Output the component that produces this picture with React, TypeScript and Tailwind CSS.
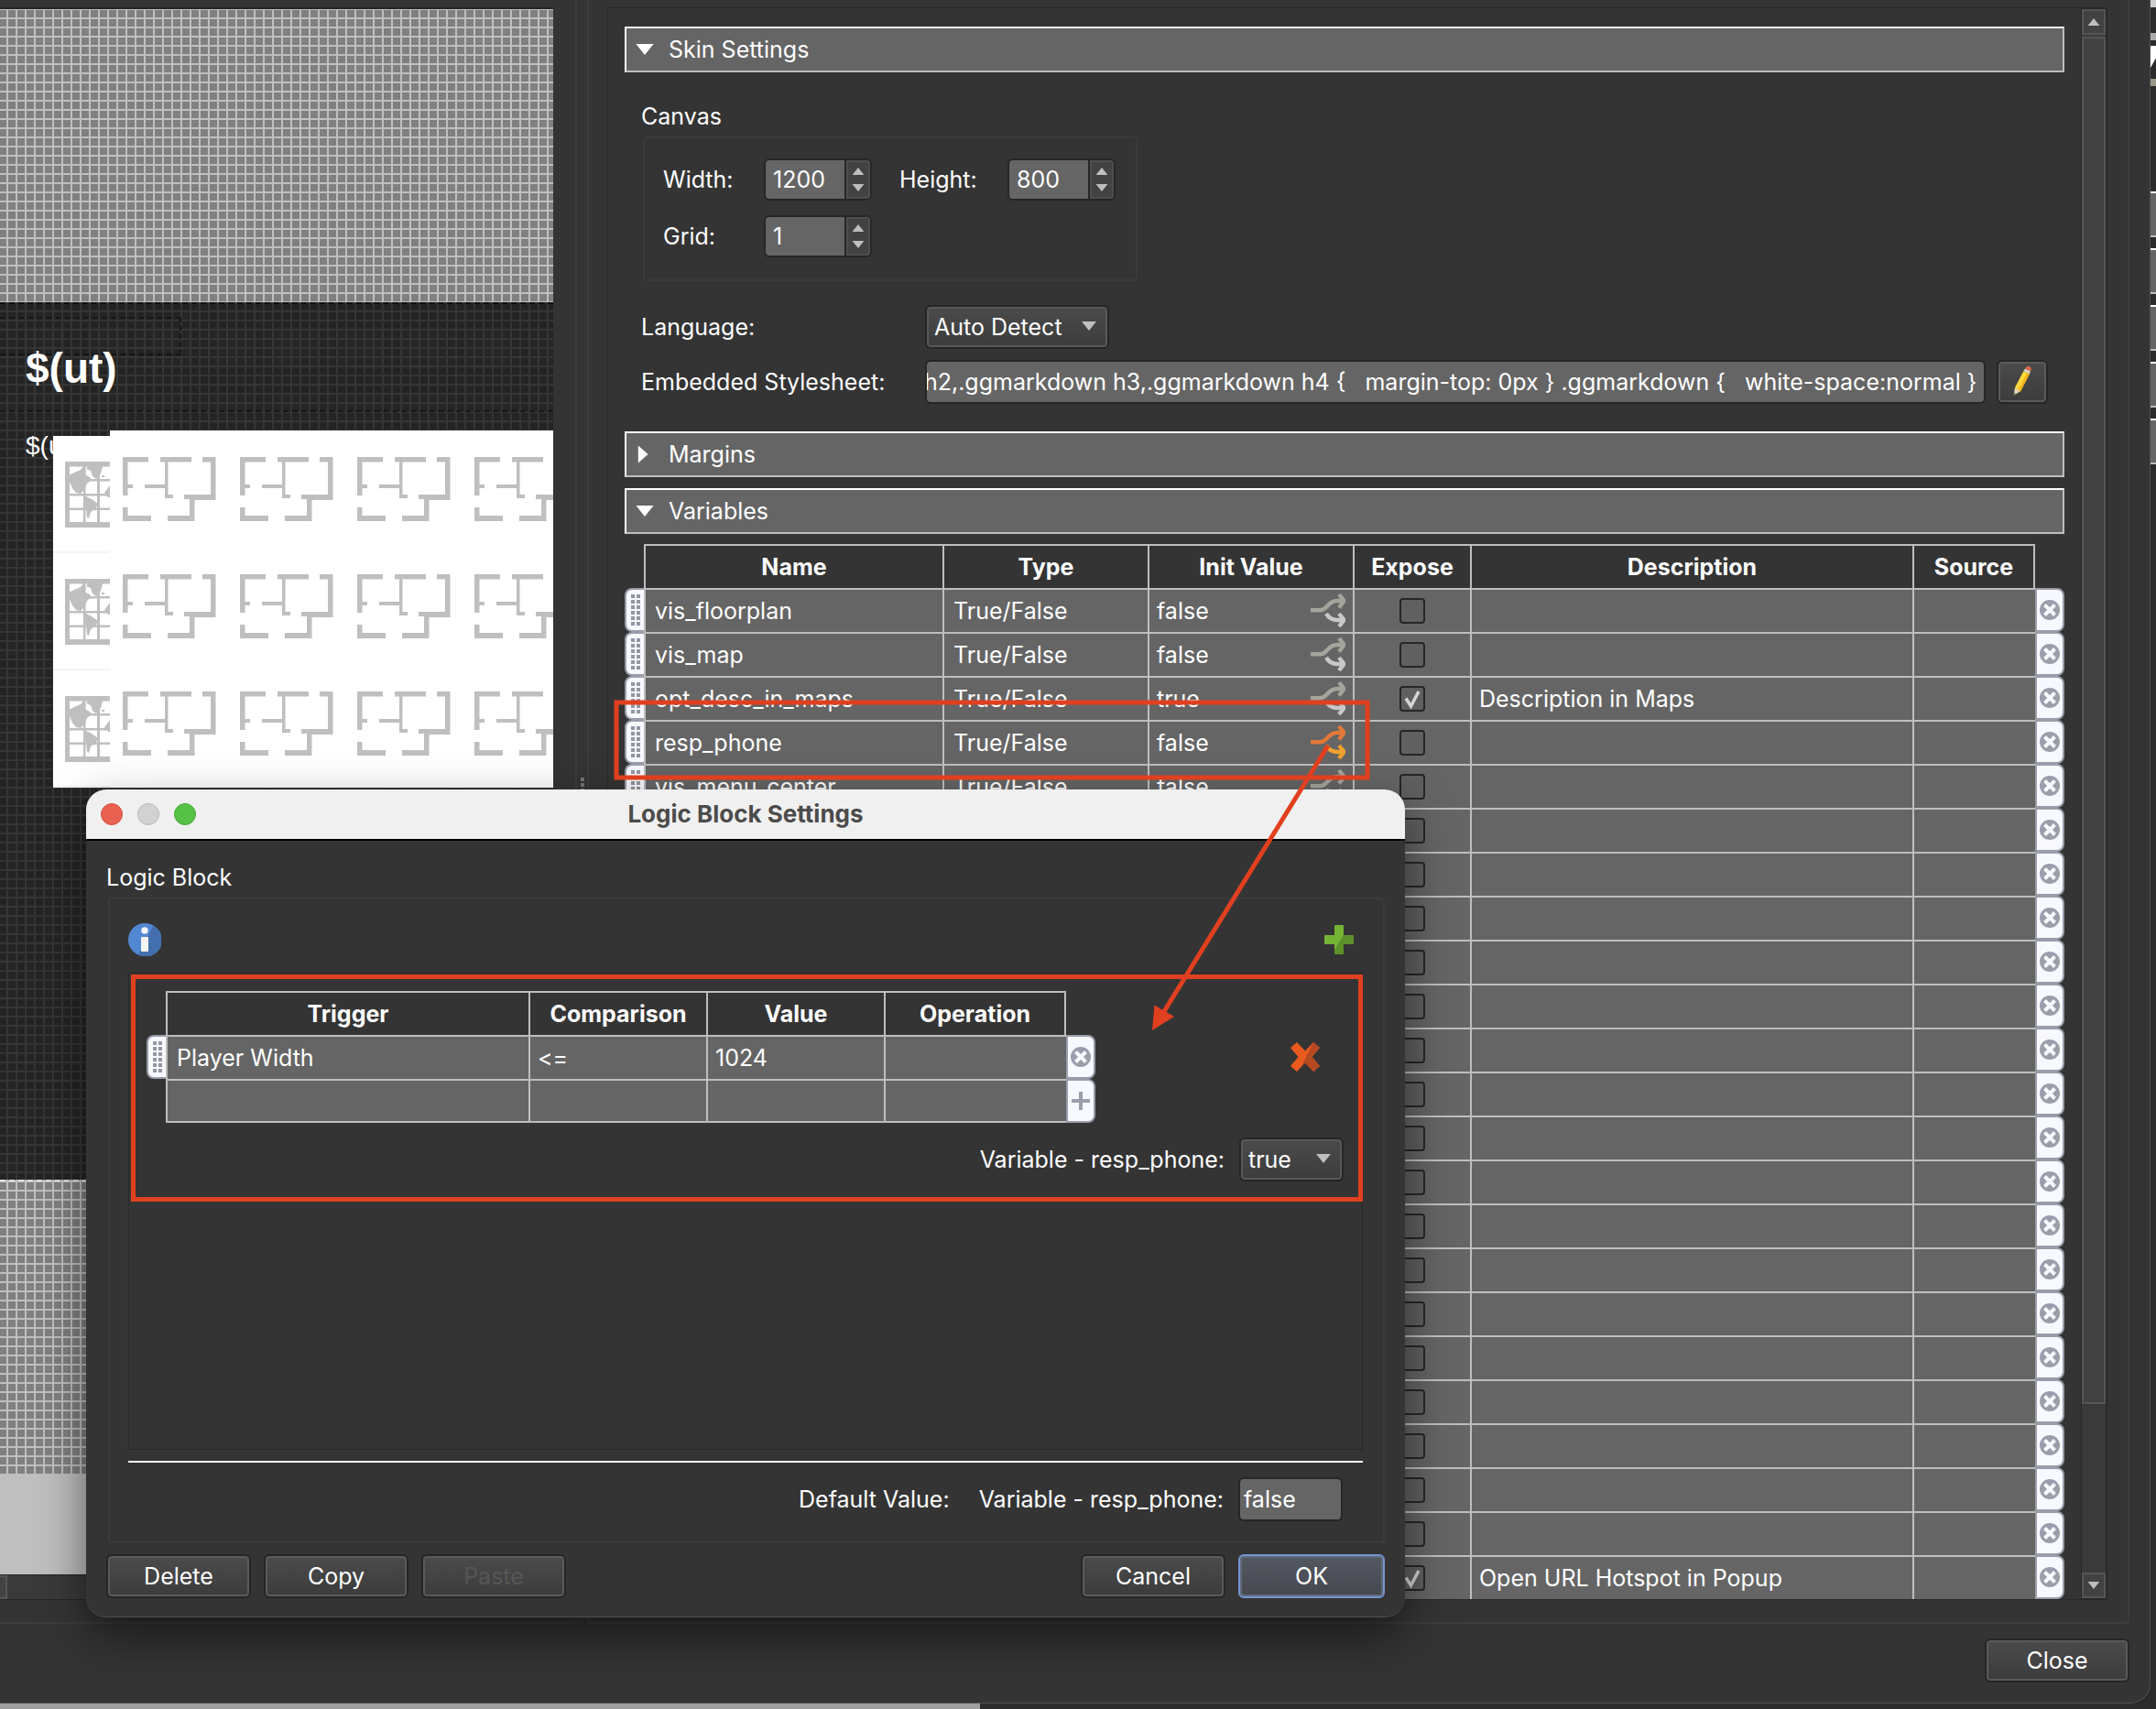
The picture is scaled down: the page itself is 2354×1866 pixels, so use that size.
import { useEffect, useRef, type ReactNode } from "react"

type Variable = {
  name: string
  type: string
  init: string
  exposed?: boolean
  description?: string
  logic?: boolean
}

const variables: Variable[] = [
  { name: "vis_floorplan", type: "True/False", init: "false" },
  { name: "vis_map", type: "True/False", init: "false" },
  { name: "opt_desc_in_maps", type: "True/False", init: "true", exposed: true, description: "Description in Maps" },
  { name: "resp_phone", type: "True/False", init: "false", logic: true },
  { name: "vis_menu_center", type: "True/False", init: "false" },
  ...Array(17).fill({ name: "", type: "", init: "" }),
  { name: "", type: "", init: "", exposed: true, description: "Open URL Hotspot in Popup" },
]

const stylesheet =
  ".ggmarkdown h1,.ggmarkdown h2,.ggmarkdown h3,.ggmarkdown h4 {   margin-top: 0px } .ggmarkdown {   white-space:normal }"

const cell = "h-12 border-l-2 border-t-2 border-[#bebebe] p-0"

function Triangle({ dir, className }: { dir: "up" | "down" | "right"; className: string }) {
  const points = { up: "0,10 8,0 16,10", down: "0,0 16,0 8,10", right: "2,-3 11,5 2,13" }[dir]
  return (
    <svg viewBox="0 0 16 10" className={`overflow-visible ${className}`} aria-hidden="true">
      <polygon points={points} fill="currentColor" />
    </svg>
  )
}

function ForkIcon({ active }: { active?: boolean }) {
  const upper = active ? "#e0793a" : "#a5a59c"
  const lower = active ? "#efa02d" : "#c8c8c8"
  return (
    <svg viewBox="0 0 38 38" className="size-[38px]" fill="none" strokeWidth="4.4" aria-hidden="true">
      <path d="M17 22C20 27 24 29 29 29H36M31 22L36.5 29L31 36" stroke={lower} />
      <path d="M0 18.3H10C19 18.3 18 8 29 8H36M31 1L36.5 8L31 15.5" stroke={upper} />
    </svg>
  )
}

function DragHandle() {
  return (
    <button
      type="button"
      aria-label="Move row"
      className="flex h-12 w-full items-center justify-center rounded-l-lg border-2 border-r-0 border-[#9b9eaa] bg-[#f8f9ff]"
    >
      <svg viewBox="0 0 10 34" className="h-[34px] w-2.5" fill="#9496a0" aria-hidden="true">
        {[0, 6, 12, 18, 24, 30].map((y) => (
          <g key={y}>
            <rect x="0" y={y} width="4" height="4" />
            <rect x="6" y={y} width="4" height="4" />
          </g>
        ))}
      </svg>
    </button>
  )
}

function EndButton({ kind }: { kind: "remove" | "add" }) {
  return (
    <button
      type="button"
      aria-label={kind === "remove" ? "Remove row" : "Add row"}
      className="flex h-12 w-8 items-center justify-center rounded-r-lg border-2 border-[#9b9eaa] bg-[#f8f9ff]"
    >
      <svg viewBox="0 0 22 22" className="size-[22px]" aria-hidden="true">
        {kind === "remove" ? (
          <>
            <circle cx="11" cy="11" r="11" fill="#9b9eaa" />
            <path d="M5.5 5.5L16.5 16.5M16.5 5.5L5.5 16.5" stroke="#f8f9ff" strokeWidth="4" />
          </>
        ) : (
          <path d="M11 1V21M1 11H21" stroke="#9b9eaa" strokeWidth="4" />
        )}
      </svg>
    </button>
  )
}

function PushButton({ children, className = "w-[158px]", primary, disabled }: {
  children: ReactNode
  className?: string
  primary?: boolean
  disabled?: boolean
}) {
  const look = primary
    ? "border-[#7396cf] bg-linear-to-b from-[#535861] to-[#464850] ring-[#626a7a]"
    : "border-[#262626] bg-linear-to-b from-[#4b4b4b] to-[#3c3c3c] ring-[#5a5a5a]"
  return (
    <button
      type="button"
      disabled={disabled}
      className={`flex h-12 items-center justify-center rounded-md border-2 ring-2 ring-inset ${look} ${disabled ? "text-[#565656]" : ""} ${className}`}
    >
      {children}
    </button>
  )
}

function Dropdown({ id, value, className }: { id: string; value: string; className: string }) {
  return (
    <div className={`relative h-12 ${className}`}>
      <select
        id={id}
        defaultValue={value}
        className="size-full appearance-none rounded-md border-2 border-[#262626] bg-linear-to-b from-[#4b4b4b] to-[#3c3c3c] pl-2 ring-2 ring-inset ring-[#585858]"
      >
        <option>{value}</option>
      </select>
      <Triangle dir="down" className="pointer-events-none absolute right-3.5 top-[18px] h-2.5 w-4 text-[#bebebe]" />
    </div>
  )
}

function SpinBox({ id, value }: { id: string; value: string }) {
  return (
    <div className="flex h-[46px] w-[118px] overflow-hidden rounded-md border-2 border-[#262626] bg-[#656565]">
      <input id={id} defaultValue={value} inputMode="numeric" className="min-w-0 flex-1 pl-2" />
      <div className="flex w-7 flex-col items-center justify-center gap-0.5 rounded-r-sm border-l-2 border-[#262626] bg-[#424242] text-[#bebebe] ring-2 ring-inset ring-[#4e4e4e]">
        <button type="button" aria-label="Increase" className="flex h-4 items-center">
          <Triangle dir="up" className="h-2 w-4" />
        </button>
        <button type="button" aria-label="Decrease" className="flex h-4 items-center">
          <Triangle dir="down" className="h-2 w-4" />
        </button>
      </div>
    </div>
  )
}

function SectionBar({ title, open }: { title: string; open?: boolean }) {
  return (
    <button
      type="button"
      aria-expanded={!!open}
      className="flex h-[50px] w-full items-center gap-4 border-2 border-b-[#bebebe] border-l-white border-r-[#bebebe] border-t-white bg-[#656565] pl-2.5"
    >
      <Triangle dir={open ? "down" : "right"} className="h-3 w-5" />
      {title}
    </button>
  )
}

function CheckBox({ label, checked }: { label: string; checked?: boolean }) {
  return (
    <span className="relative mx-auto block size-7">
      <input
        type="checkbox"
        aria-label={label}
        defaultChecked={checked}
        className="block size-7 appearance-none rounded-sm border-2 border-[#262626] bg-[#606060]"
      />
      {checked && (
        <svg viewBox="0 0 28 28" className="pointer-events-none absolute inset-0" fill="none" aria-hidden="true">
          <path d="M7 13.5L12.5 22L21 6" stroke="#d6d6d6" strokeWidth="3.5" />
        </svg>
      )}
    </span>
  )
}

function FloorplanIcon() {
  return (
    <svg viewBox="0 0 102 70" className="h-[70px] w-[102px]" fill="#bfbfbf" aria-hidden="true">
      <path d="M0 0H28V5.5H5.5V30H11V34H5.5V42H0Z" />
      <path d="M41 0H75V5.5H49.5V41H55V45H46V34H24V30H46V5.5H41Z" />
      <path d="M87 0H101.5V47H78.5V70H49V64H73V46H67V41H96V5.5H87Z" />
      <path d="M0 55H5.5V64H31V70H0Z" />
    </svg>
  )
}

function MapIcon() {
  return (
    <svg viewBox="0 0 49 72" className="h-[72px] w-[49px]" fill="#bfbfbf" aria-hidden="true">
      <path d="M0 0H49V5.5H0ZM0 66H49V72H0ZM0 0H5V72H0ZM20 3H22.5V70H20ZM35 3H38V70H35ZM3 19H49V21.5H3ZM3 35H49V37.5H3ZM3 50.5H49V53H3Z" />
      <path d="M4 15L10 12L17 9L20 5L23 10L21 14L27 17L29 20L24 24L21 31L17 35L12 34L8 29L4 20Z" />
      <path d="M27 2H42L39 13L34 19L30 16L28 10L23 8Z" />
      <path d="M21 37L29 41L36 46L33 52L28 55L26 62L24 61L23 51L21 45Z" />
      <path d="M49 26L43 34L47 39H49ZM40 15L43 15L43 17L40 17Z" />
    </svg>
  )
}

function SkinCanvas() {
  const light =
    "bg-[#808080] bg-[linear-gradient(to_right,#bfbfbf_2px,transparent_2px),linear-gradient(#bfbfbf_2px,transparent_2px)] bg-[size:10px_10px]"
  return (
    <section className="w-[630px] shrink-0 rounded-br border-b-2 border-r-2 border-[#3d3d3d] pb-6 pr-6 pt-2">
      <div className="border-t-2 border-[#242424]">
        <div className={`h-80 ${light} bg-[position:7px_9px]`} />
        <div className="relative h-[958px] overflow-hidden border-t-2 border-dashed border-[#111] bg-[#242424] bg-[linear-gradient(to_right,#353535_2px,transparent_2px),linear-gradient(#353535_2px,transparent_2px)] bg-[size:10px_10px] bg-[position:7px_7px]">
          <div className="absolute left-0 top-3.5 h-[42px] w-[198px] border-2 border-l-0 border-dashed border-[#161616]" />
          <div className="absolute inset-x-0 top-[116px] border-t-2 border-dashed border-[#161616]" />
          <p className="absolute left-7 top-11 font-['Liberation_Sans',sans-serif] text-[46px] leading-[52px] font-bold">$(ut)</p>
          <p className="absolute left-7 top-[139px] font-['Liberation_Sans',sans-serif] text-[28px] leading-8">$(ud)</p>
          <div className="absolute left-[58px] top-[144px] w-[62px] bg-white">
            {[0, 1, 2].map((i) => (
              <div key={i} className="flex h-32 items-start border-b-2 border-[#f4f4f4] pl-[13px] pt-7">
                <MapIcon />
              </div>
            ))}
          </div>
          <div className="absolute left-[120px] right-0 top-[138px] h-[390px] overflow-hidden bg-white">
            <div className="grid w-[512px] grid-cols-4">
              {Array(12)
                .fill(0)
                .map((_, i) => (
                  <div key={i} className="h-32 pl-3.5 pt-[29px]">
                    <FloorplanIcon />
                  </div>
                ))}
            </div>
          </div>
        </div>
        <div className={`h-[322px] ${light} border-t-2 border-dashed border-[#e0e0e0] bg-[position:7px_9px]`} />
        <div className="h-[109px] bg-[#bfbfbf]" />
        <div className="flex h-7 border-y border-[#262626] bg-[#3a3a3a]">
          <div className="w-2 border-2 border-l-0 border-[#555] bg-[#424242]" />
        </div>
      </div>
    </section>
  )
}

function VariablesTable() {
  return (
    <table className="w-full table-fixed border-separate border-spacing-0">
      <colgroup>
        <col className="w-[21px]" />
        <col className="w-[326px]" />
        <col className="w-56" />
        <col className="w-56" />
        <col className="w-32" />
        <col />
        <col className="w-[134px]" />
        <col className="w-8" />
      </colgroup>
      <thead>
        <tr>
          <td />
          {["Name", "Type", "Init Value", "Expose", "Description", "Source"].map((title) => (
            <th key={title} className={`${cell} font-bold last-of-type:border-r-2`}>
              {title}
            </th>
          ))}
          <td />
        </tr>
      </thead>
      <tbody>
        {variables.map((v, i) => (
          <tr key={i} className="bg-[#656565]">
            <td className="bg-[#343434] p-0">
              <DragHandle />
            </td>
            <td className={`${cell} pl-2.5`}>{v.name}</td>
            <td className={`${cell} pl-2.5`}>{v.type}</td>
            <td className={`${cell} pl-2`}>
              <div className="flex items-center justify-between pr-2">
                {v.init}
                {v.init && <ForkIcon active={v.logic} />}
              </div>
            </td>
            <td className={cell}>
              <CheckBox label={`Expose ${v.name}`} checked={v.exposed} />
            </td>
            <td className={`${cell} pl-2`}>{v.description}</td>
            <td className={cell} />
            <td className="bg-[#343434] p-0">
              <EndButton kind="remove" />
            </td>
          </tr>
        ))}
      </tbody>
    </table>
  )
}

function SettingsPanel() {
  const cssInput = useRef<HTMLInputElement>(null)

  // keep the end of the stylesheet in view
  useEffect(() => {
    if (cssInput.current) cssInput.current.scrollLeft = cssInput.current.scrollWidth
  }, [])

  return (
    <section className="min-w-0 flex-1 rounded-b border-2 border-t-0 border-[#3d3d3d] pb-6 pl-5 pr-[22px] pt-2">
      <div className="flex justify-between border border-[#292929]">
        <div className="min-w-0 flex-1 pl-[18px] pr-[18px] pt-5">
          <SectionBar title="Skin Settings" open />

          <div className="pb-[30px] pl-[18px] pr-[18px] pt-8">
            <h3 className="leading-8">Canvas</h3>
            <div className="ml-0.5 mt-1.5 grid w-fit grid-cols-[110px_148px_118px_118px] gap-y-4 rounded border-2 border-[#3b3b3b] pb-6 pl-5 pr-[22px] pt-[22px] [&>label]:self-center">
              <label htmlFor="canvas-width">Width:</label>
              <SpinBox id="canvas-width" value="1200" />
              <label htmlFor="canvas-height">Height:</label>
              <SpinBox id="canvas-height" value="800" />
              <label htmlFor="canvas-grid">Grid:</label>
              <SpinBox id="canvas-grid" value="1" />
            </div>

            <div className="mt-[26px] flex items-center">
              <label htmlFor="language" className="w-[310px]">Language:</label>
              <Dropdown id="language" value="Auto Detect" className="w-[201px]" />
            </div>
            <div className="mt-3 flex items-center">
              <label htmlFor="stylesheet" className="w-[310px] shrink-0">Embedded Stylesheet:</label>
              <input
                id="stylesheet"
                ref={cssInput}
                defaultValue={stylesheet}
                className="h-12 min-w-0 flex-1 rounded-md border-2 border-[#262626] bg-[#656565] pr-2"
              />
              <PushButton className="ml-3 w-14">
                <svg viewBox="0 0 24 36" className="h-9 w-6" aria-label="Edit stylesheet">
                  <path d="M2.500 33L4 24L10 28Z" fill="#e8d2b0" />
                  <path d="M2.500 33L3 30L5 31Z" fill="#555" />
                  <path d="M4 24L13.500 6L20 9L10 28.500Z" fill="#ffd93b" />
                  <path d="M8 26.500L17.500 7.500L20 9L10 28.500Z" fill="#f2b21b" />
                  <path d="M13.500 6L15 3.500L21 6.500L20 9Z" fill="#d5d5d5" />
                  <path d="M15 3.500Q17.500 -.5 20.500 1.500Q23 3.500 21 6.500Z" fill="#d9694a" />
                </svg>
              </PushButton>
            </div>
          </div>

          <SectionBar title="Margins" />
          <div className="mb-[11px] mt-3">
            <SectionBar title="Variables" open />
          </div>
          <VariablesTable />
        </div>

        <div className="flex w-7 flex-col border border-[#292929] bg-[#3a3a3a] text-[#bebebe]">
          <button type="button" aria-label="Scroll up" className="flex h-7 items-center justify-center border-2 border-[#555] bg-[#424242]">
            <Triangle dir="up" className="h-2 w-4" />
          </button>
          <div className="mt-0.5 flex-1">
            <div className="h-[89%] border-2 border-[#555] bg-[#424242]" />
          </div>
          <button type="button" aria-label="Scroll down" className="flex h-7 items-center justify-center border-2 border-[#555] bg-[#424242]">
            <Triangle dir="down" className="h-2 w-4" />
          </button>
        </div>
      </div>
    </section>
  )
}

function LogicTable() {
  return (
    <table className="w-[1036px] table-fixed border-separate border-spacing-0">
      <colgroup>
        <col className="w-[21px]" />
        <col className="w-[396px]" />
        <col className="w-[194px]" />
        <col className="w-[194px]" />
        <col />
        <col className="w-8" />
      </colgroup>
      <thead>
        <tr>
          <td />
          {["Trigger", "Comparison", "Value", "Operation"].map((title) => (
            <th key={title} className={`${cell} font-bold last-of-type:border-r-2`}>
              {title}
            </th>
          ))}
          <td />
        </tr>
      </thead>
      <tbody>
        <tr className="bg-[#656565]">
          <td className="bg-[#343434] p-0">
            <DragHandle />
          </td>
          <td className={`${cell} pl-2.5`}>Player Width</td>
          <td className={`${cell} pl-2`}>&lt;=</td>
          <td className={`${cell} pl-2`}>1024</td>
          <td className={cell} />
          <td className="bg-[#343434] p-0">
            <EndButton kind="remove" />
          </td>
        </tr>
        <tr className="bg-[#656565]">
          <td className="bg-[#343434] p-0" />
          <td className={`${cell} border-b-2`} />
          <td className={`${cell} border-b-2`} />
          <td className={`${cell} border-b-2`} />
          <td className={`${cell} border-b-2`} />
          <td className="bg-[#343434] p-0">
            <EndButton kind="add" />
          </td>
        </tr>
      </tbody>
    </table>
  )
}

function LogicBlockDialog() {
  return (
    <div
      role="dialog"
      aria-labelledby="dialog-title"
      className="absolute left-[94px] top-[862px] w-[1440px] overflow-hidden rounded-[22px] border-b border-[#505050] bg-[#343434] shadow-[0_20px_50px_rgba(0,0,0,0.5)]"
    >
      <header className="grid h-14 grid-cols-3 items-center border-b-2 border-black bg-[#f0f0f0] px-4">
        <div className="flex gap-4">
          <button type="button" aria-label="Close dialog" className="size-6 rounded-full border border-[#d0503f] bg-[#ea6152]" />
          <button type="button" aria-label="Minimize dialog" className="size-6 rounded-full border border-[#b8b8b8] bg-[#d2d2d2]" />
          <button type="button" aria-label="Zoom dialog" className="size-6 rounded-full border border-[#46a838] bg-[#56c144]" />
        </div>
        <h2 id="dialog-title" className="text-center text-[26px] font-bold text-[#4b4b4b]">Logic Block Settings</h2>
      </header>

      <div className="px-[22px] pb-5 pt-6">
        <h3 className="leading-8">Logic Block</h3>
        <div className="ml-0.5 mt-1.5 rounded border-2 border-[#3b3b3b] pb-[22px] pl-5 pr-[22px] pt-[26px]">
          <div className="flex h-9 items-center justify-between pr-2.5">
            <button type="button" aria-label="Info">
              <svg viewBox="0 0 36 36" className="size-9">
                <circle cx="18" cy="18" r="18" fill="#5288d3" />
                <path d="M27.500 2.500A18 18 0 0 1 11 34.500Z" fill="#446fae" />
                <circle cx="18" cy="8" r="3.700" fill="#f4f4f4" />
                <rect x="14" y="15" width="8" height="16" rx="1" fill="#f4f4f4" />
              </svg>
            </button>
            <button type="button" aria-label="Add logic block">
              <svg viewBox="0 0 32 32" className="size-8">
                <path d="M11 1Q11 0 12 0H20Q21 0 21 1V11H31Q32 11 32 12V20Q32 21 31 21H21V31Q21 32 20 32H12Q11 32 11 31V21H1Q0 21 0 20V12Q0 11 1 11H11Z" fill="#76b434" />
                <path d="M21 11H31Q32 11 32 12V20Q32 21 31 21H21V31Q21 32 20 32H12Q11 32 11 31V27Z" fill="#5d912b" />
              </svg>
            </button>
          </div>

          <div className="mt-[18px] h-[521px] border border-[#292929] pl-[19px] pr-5 pt-[19px]">
            <div className="flex items-center justify-between">
              <LogicTable />
              <button type="button" aria-label="Delete logic block" className="mr-[26px]">
                <svg viewBox="0 0 32 32" className="size-8">
                  <path d="M7 0L16 9.500L25 0L32 6L23.500 16L32 26L25 32L16 22.500L7 32L0 26L8.500 16L0 6Z" fill="#ea5a1f" />
                  <path d="M25 0L32 6L23.500 16L32 26L25 32L16 22.500L12 26Z" fill="#b54a22" />
                </svg>
              </button>
            </div>
            <div className="mt-4 flex items-center justify-end gap-4">
              <label htmlFor="block-value">Variable - resp_phone:</label>
              <Dropdown id="block-value" value="true" className="w-[114px]" />
            </div>
          </div>

          <hr className="mt-3 border-t-2 border-white" />
          <div className="mt-4 flex items-center justify-end pr-[22px]">
            <span className="mr-8">Default Value:</span>
            <label htmlFor="default-value" className="mr-4">Variable - resp_phone:</label>
            <input
              id="default-value"
              defaultValue="false"
              className="h-12 w-[114px] rounded-md border-2 border-[#262626] bg-[#656565] px-1"
            />
          </div>
        </div>

        <div className="mt-3 flex gap-3.5">
          <PushButton>Delete</PushButton>
          <PushButton>Copy</PushButton>
          <PushButton disabled>Paste</PushButton>
          <div className="flex-1" />
          <PushButton>Cancel</PushButton>
          <PushButton primary className="w-40">OK</PushButton>
        </div>
      </div>
    </div>
  )
}

function Annotations() {
  return (
    <svg
      viewBox="0 0 1500 1320"
      className="pointer-events-none absolute left-0 top-0 h-[1320px] w-[1500px]"
      fill="none"
      stroke="#e0401f"
      strokeWidth="5"
      aria-hidden="true"
    >
      <rect x="673" y="767" width="820" height="82" />
      <rect x="145.500" y="1066.500" width="1340" height="243" />
      <path d="M1450 814L1270 1106" />
      <polygon points="1258,1125 1260.500,1097.500 1282,1110" fill="#e0401f" stroke="none" />
    </svg>
  )
}

export default function App() {
  return (
    <div className="relative flex min-h-screen flex-col overflow-hidden bg-[#2b2b2b] font-['Inter',sans-serif] text-[25px] leading-8 text-white">
      <div className="flex">
        <main className="min-w-0 flex-1 rounded-br-[22px] border-b border-r border-[#505050] bg-[#343434]">
          <div className="flex pr-[22px]">
            <SkinCanvas />
            <div className="flex w-[11px] flex-col items-center justify-center gap-0.5">
              {Array(13)
                .fill(0)
                .map((_, i) => (
                  <span key={i} className="size-1 bg-[#777]" />
                ))}
            </div>
            <SettingsPanel />
          </div>
          <footer className="flex justify-end pb-[22px] pr-[22px] pt-4">
            <PushButton>Close</PushButton>
          </footer>
        </main>

        {/* edge of the window behind */}
        <aside className="flex w-1.5 flex-col">
          <div className="h-2 bg-[#ccc]" />
          <div className="mt-7 h-2 bg-[#aaa]" />
          <div className="mt-1.5 h-6 bg-white [clip-path:polygon(0_0,100%_0,100%_55%,0_100%)]" />
          <div className="mb-[115px] mt-3 h-2 bg-[#9a978a]" />
          {Array(5)
            .fill(0)
            .map((_, i) => (
              <div key={i} className="mb-3 h-[50px] border-y-2 border-b-[#bebebe] border-t-white bg-[#656565]" />
            ))}
        </aside>
      </div>
      <div className="flex flex-1">
        <div className="w-[1070px] bg-[#9f9f9f]" />
      </div>

      <LogicBlockDialog />
      <Annotations />
    </div>
  )
}
